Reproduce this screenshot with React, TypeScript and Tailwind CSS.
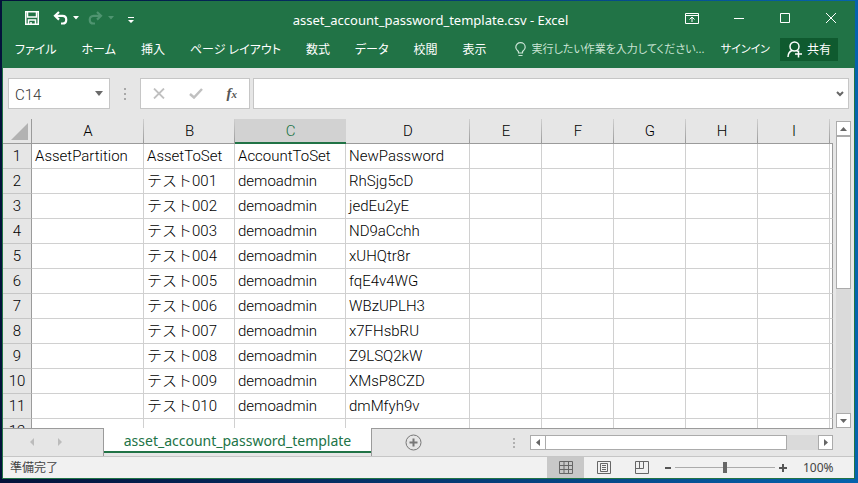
import type { ReactNode } from "react";

const tabs = ["ファイル", "ホーム", "挿入", "ページ レイアウト", "数式", "データ", "校閲", "表示"];

const columns = [
  { name: "A", width: "w-[112px]" },
  { name: "B", width: "w-[91px]" },
  { name: "C", width: "w-[111px]" },
  { name: "D", width: "w-[124px]" },
  { name: "E", width: "w-[72px]" },
  { name: "F", width: "w-[72px]" },
  { name: "G", width: "w-[72px]" },
  { name: "H", width: "w-[72px]" },
  { name: "I", width: "w-[72px]" },
];

const rows = [
  ["AssetPartition", "AssetToSet", "AccountToSet", "NewPassword"],
  ["", "テスト001", "demoadmin", "RhSjg5cD"],
  ["", "テスト002", "demoadmin", "jedEu2yE"],
  ["", "テスト003", "demoadmin", "ND9aCchh"],
  ["", "テスト004", "demoadmin", "xUHQtr8r"],
  ["", "テスト005", "demoadmin", "fqE4v4WG"],
  ["", "テスト006", "demoadmin", "WBzUPLH3"],
  ["", "テスト007", "demoadmin", "x7FHsbRU"],
  ["", "テスト008", "demoadmin", "Z9LSQ2kW"],
  ["", "テスト009", "demoadmin", "XMsP8CZD"],
  ["", "テスト010", "demoadmin", "dmMfyh9v"],
  [],
];

interface IconButtonProps {
  label: string;
  className?: string;
  children: ReactNode;
}

function IconButton({ label, className = "", children }: IconButtonProps) {
  return (
    <button type="button" aria-label={label} className={`flex shrink-0 items-center justify-center ${className}`}>
      {children}
    </button>
  );
}

function Caret() {
  return (
    <svg width="6" height="4" viewBox="0 0 6 4" fill="currentColor">
      <path d="M0 0h6L3 3.500z" />
    </svg>
  );
}

function TitleBar() {
  return (
    <header className="flex h-[34px] items-center text-white">
      <div className="flex flex-1 items-center pl-[22px]">
        <IconButton label="上書き保存" className="w-[14px]">
          <svg width="14" height="14" viewBox="0 0 14 14" fill="none" stroke="currentColor" strokeWidth="1.5">
            <path d="M.75.75h12.5v12.5H.75z" />
            <path d="M2.500 1v5h9V1M3.500 13V9h7v4" />
            <path d="M6 11v2.500" />
          </svg>
        </IconButton>
        <IconButton label="元に戻す" className="ml-3.5 gap-[5px]">
          <svg width="15" height="14" viewBox="0 0 15 14" fill="none" stroke="currentColor" strokeWidth="2.200">
            <path d="M6 1 2 4.800 6 8.600" />
            <path d="M2 4.800h7.500c5 0 5 7.700 0 7.700H8" />
          </svg>
          <Caret />
        </IconButton>
        <IconButton label="やり直し" className="ml-[9px] gap-[5px] text-[#4f9470]">
          <svg width="15" height="14" viewBox="0 0 15 14" fill="none" stroke="currentColor" strokeWidth="2.200">
            <path d="M9 1l4 3.800-4 3.800" />
            <path d="M13 4.800H5.500c-5 0-5 7.700 0 7.700H7" />
          </svg>
          <Caret />
        </IconButton>
        <IconButton label="クイック アクセス ツール バーのユーザー設定" className="ml-3.5 mt-1">
          <svg width="6" height="6" viewBox="0 0 6 6" fill="currentColor">
            <path d="M0 0h6v1H0zM0 3h6L3 6z" />
          </svg>
        </IconButton>
      </div>
      <h1 className="pt-1 text-[13px] leading-4">asset_account_password_template.csv - Excel</h1>
      <div className="flex flex-1 items-center justify-end pr-[18px]">
        <IconButton label="リボンの表示オプション" className="mr-[35px]">
          <svg width="14" height="11" viewBox="0 0 14 11" fill="none" stroke="currentColor">
            <path d="M.5.5h13v10H.5zM.5 2.500h13M7 9V4.500M4.500 6.500 7 4l2.500 2.500" />
          </svg>
        </IconButton>
        <IconButton label="最小化" className="mr-9">
          <svg width="10" height="10" viewBox="0 0 10 10" stroke="currentColor">
            <path d="M0 5.500h10" />
          </svg>
        </IconButton>
        <IconButton label="最大化" className="mr-9">
          <svg width="10" height="10" viewBox="0 0 10 10" fill="none" stroke="currentColor">
            <path d="M.5.5h9v9h-9z" />
          </svg>
        </IconButton>
        <IconButton label="閉じる">
          <svg width="10" height="10" viewBox="0 0 10 10" stroke="currentColor">
            <path d="M0 0l10 10M10 0 0 10" />
          </svg>
        </IconButton>
      </div>
    </header>
  );
}

function RibbonTabs() {
  return (
    <div className="flex h-[33px] items-center pl-3 pr-4 pb-1 text-xs text-white [font-feature-settings:'palt']">
      <nav className="flex gap-[25px]">
        {tabs.map((tab) => (
          <button key={tab} type="button" className="whitespace-nowrap">
            {tab}
          </button>
        ))}
      </nav>
      <label className="ml-7 flex min-w-0 flex-1 items-center gap-1.5 text-[#c9e3d4]">
        <svg width="11" height="15" viewBox="0 0 11 15" fill="none" stroke="currentColor" strokeWidth="1.2" className="shrink-0">
          <path d="M3.500 11V9.500C2.500 8.500.8 7.500.8 5.200a4.700 4.500 0 0 1 9.400 0c0 2.300-1.700 3.300-2.700 4.300V11zM3.500 13.500h4" />
        </svg>
        <input
          type="text"
          aria-label="操作アシスト"
          placeholder="実行したい作業を入力してください..."
          className="w-full min-w-0 bg-transparent text-[11px] outline-none placeholder:text-[#c9e3d4]"
        />
      </label>
      <button type="button" className="ml-2 whitespace-nowrap text-[11px]">サインイン</button>
      <button type="button" className="ml-2.5 flex h-[23px] w-[58px] shrink-0 items-center justify-center gap-1 whitespace-nowrap bg-[#0f5a2f]">
        <svg width="16" height="17" viewBox="0 0 16 17" fill="none" stroke="currentColor" strokeWidth="1.5">
          <circle cx="7.500" cy="5.500" r="4.500" />
          <path d="M1 16c0-3.500 1.500-5.500 4-6.500M9.500 9.500l1.500 1M8 13h7M11.500 9.500v7" />
        </svg>
        共有
      </button>
    </div>
  );
}

function FormulaBar() {
  return (
    <div className="flex h-[51px] items-center gap-[3px] px-[5px]">
      <div className="flex h-[31px] w-[102px] shrink-0 items-center border border-[#c6c6c6] bg-white pr-1.5">
        <input
          type="text"
          aria-label="名前ボックス"
          defaultValue="C14"
          className="w-full min-w-0 pl-1.5 pt-1 font-['Roboto',sans-serif] text-[15px] font-light text-[#333] outline-none"
        />
        <IconButton label="名前の一覧" className="text-[#6a6a6a]">
          <svg width="8" height="5" viewBox="0 0 8 5" fill="currentColor">
            <path d="M0 0h8L4 5z" />
          </svg>
        </IconButton>
      </div>
      <svg width="24" height="12" viewBox="0 0 24 12" fill="#a8a8a8" className="shrink-0">
        <path d="M11 0h2v2h-2zM11 5h2v2h-2zM11 10h2v2h-2z" />
      </svg>
      <div className="flex h-[31px] w-[110px] shrink-0 items-center justify-between border border-[#c6c6c6] bg-white px-3">
        <IconButton label="キャンセル" className="text-[#c0c0c0]">
          <svg width="12" height="11" viewBox="0 0 12 11" stroke="currentColor" strokeWidth="1.800">
            <path d="M1 .5l10 10M11 .5l-10 10" />
          </svg>
        </IconButton>
        <IconButton label="入力" className="text-[#c0c0c0]">
          <svg width="14" height="11" viewBox="0 0 14 11" fill="none" stroke="currentColor" strokeWidth="2.500">
            <path d="M1 6l4 3.500L13 1" />
          </svg>
        </IconButton>
        <button type="button" aria-label="関数の挿入" className="font-['Liberation_Serif',serif] text-[15px] font-bold italic leading-4 text-[#555]">
          f<span className="text-[11px]">x</span>
        </button>
      </div>
      <div className="flex h-[31px] min-w-0 flex-1 items-center border border-[#c6c6c6] bg-white pr-1">
        <input type="text" aria-label="数式バー" className="w-full min-w-0 px-2 text-[15px] font-light outline-none" />
        <IconButton label="数式バーの展開" className="text-[#666]">
          <svg width="8" height="6" viewBox="0 0 8 6" fill="none" stroke="currentColor" strokeWidth="2">
            <path d="M1 1l3 3 3-3" />
          </svg>
        </IconButton>
      </div>
    </div>
  );
}

function Sheet() {
  return (
    <div className="min-w-0 flex-1 overflow-hidden">
      <table className="w-full table-fixed border-separate border-spacing-0 font-['Roboto','Noto_Sans_CJK_JP',sans-serif] text-[15px] font-light leading-5 text-black">
        <thead>
          <tr className="h-[25px]">
            <th className="w-[29px] border-b border-r border-[#9b9b9b] p-0" aria-label="すべて選択">
              <svg width="17" height="17" viewBox="0 0 17 17" fill="#b2b2b2" className="ml-2">
                <path d="M17 0v17H0z" />
              </svg>
            </th>
            {columns.map(({ name, width }) => (
              <th
                key={name}
                scope="col"
                className={`${width} p-0 font-light bg-right bg-no-repeat bg-[length:1px_100%] ${
                  name === "C"
                    ? "border-b-2 border-[#217346] bg-[#d2d2d2] text-[#217346]"
                    : "border-b border-[#9b9b9b] bg-linear-to-b from-[#cfcfcf] to-[#9b9b9b]"
                }`}
              >
                {name}
              </th>
            ))}
            <th className="border-b border-[#9b9b9b] p-0" />
          </tr>
        </thead>
        <tbody>
          {rows.map((row, i) => (
            <tr key={i} className="h-[25px]">
              <th scope="row" className="border-b border-r border-b-[#c6c6c6] border-r-[#9b9b9b] bg-[#e6e6e6] p-0 font-light">
                {i + 1}
              </th>
              {columns.map(({ name }, j) => (
                <td key={name} className="border-b border-r border-[#d0d0d0] bg-white p-0 pl-[3px] whitespace-nowrap">
                  {row[j]}
                </td>
              ))}
              <td className="border-b border-r border-b-[#d0d0d0] border-r-[#9b9b9b] bg-white p-0" />
            </tr>
          ))}
        </tbody>
      </table>
    </div>
  );
}

function VerticalScroll() {
  return (
    <div className="flex w-[21px] shrink-0 flex-col px-[3px] pt-0.5">
      <div className="flex flex-1 flex-col bg-[#dadada]">
        <IconButton label="上へスクロール" className="h-[15px] border border-[#ababab] bg-white text-[#666]">
          <svg width="7" height="4" viewBox="0 0 7 4" fill="currentColor"><path d="M0 4h7L3.500 0z" /></svg>
        </IconButton>
        <div className="h-[153px] border border-[#ababab] bg-white" />
        <IconButton label="下へスクロール" className="mt-auto h-[15px] border border-[#ababab] bg-white text-[#666]">
          <svg width="7" height="4" viewBox="0 0 7 4" fill="currentColor"><path d="M0 0h7L3.500 4z" /></svg>
        </IconButton>
      </div>
    </div>
  );
}

function SheetBar() {
  return (
    <div className="flex h-7 pr-[21px]">
      <div className="flex w-[101px] shrink-0 items-start gap-6 border-r border-t border-[#9b9b9b] pl-[27px] pt-[9px] text-[#bcbcbc]">
        <IconButton label="前のシート">
          <svg width="4" height="8" viewBox="0 0 4 8" fill="currentColor"><path d="M4 0v8L0 4z" /></svg>
        </IconButton>
        <IconButton label="次のシート">
          <svg width="4" height="8" viewBox="0 0 4 8" fill="currentColor"><path d="M0 0v8l4-4z" /></svg>
        </IconButton>
      </div>
      <button type="button" className="h-[25px] w-[267px] shrink-0 border-b-2 border-[#217346] bg-white pt-0.5 text-sm leading-5 text-[#217346]">
        asset_account_password_template
      </button>
      <div className="flex flex-1 items-center border-l border-t border-[#9b9b9b]">
        <IconButton label="新しいシート" className="ml-[33px] text-[#777]">
          <svg width="17" height="17" viewBox="0 0 17 17" fill="none" stroke="currentColor">
            <circle cx="8.500" cy="8.500" r="7.500" />
            <path d="M4.500 8.500h8M8.500 4.500v8" strokeWidth="2" />
          </svg>
        </IconButton>
        <svg width="2" height="10" viewBox="0 0 2 10" fill="#b0b0b0" className="ml-auto mr-[15px]">
          <path d="M0 0h2v2H0zM0 4h2v2H0zM0 8h2v2H0z" />
        </svg>
        <div className="flex h-[15px] w-[303px] bg-[#dadada]">
          <IconButton label="左へスクロール" className="w-4 border border-[#ababab] bg-white text-[#666]">
            <svg width="4" height="7" viewBox="0 0 4 7" fill="currentColor"><path d="M4 0v7L0 3.500z" /></svg>
          </IconButton>
          <div className="w-[241px] border border-l-0 border-[#ababab] bg-white" />
          <IconButton label="右へスクロール" className="ml-auto w-[15px] border border-[#ababab] bg-white text-[#666]">
            <svg width="4" height="7" viewBox="0 0 4 7" fill="currentColor"><path d="M0 0v7l4-3.500z" /></svg>
          </IconButton>
        </div>
      </div>
    </div>
  );
}

function StatusBar() {
  return (
    <footer className="flex h-[22px] items-center border-t border-[#c6c6c6] bg-[#f1f1f1] pl-[7px] pr-[19px] text-xs text-[#444]">
      <span>準備完了</span>
      <IconButton label="標準" className="ml-auto h-full w-[37px] bg-[#c8c8c8] text-[#666]">
        <svg width="14" height="13" viewBox="0 0 14 13" fill="none" stroke="currentColor">
          <path d="M.5.5h13v12H.5zM.5 4.500h13M.5 8.500h13M5 .5v12M9.500.5v12" />
        </svg>
      </IconButton>
      <IconButton label="ページ レイアウト" className="w-[39px] text-[#666]">
        <svg width="14" height="13" viewBox="0 0 14 13" fill="none" stroke="currentColor">
          <path d="M.5.5h13v12H.5zM3.500 2.500h7v8h-7zM5 4.500h4M5 6.500h4M5 8.500h4" />
        </svg>
      </IconButton>
      <IconButton label="改ページ プレビュー" className="w-[37px] text-[#666]">
        <svg width="14" height="13" viewBox="0 0 14 13" fill="none" stroke="currentColor">
          <path d="M.5.5h13v12H.5zM.5 7.500h8v-7M4.500.5v7" />
        </svg>
      </IconButton>
      <IconButton label="縮小" className="ml-[5px] text-[#555]">
        <svg width="6" height="8" viewBox="0 0 6 8" fill="currentColor"><path d="M0 3h6v2H0z" /></svg>
      </IconButton>
      <input
        type="range"
        aria-label="ズーム"
        min="0"
        max="100"
        defaultValue="50"
        className="mx-1 h-[11px] w-[100px] appearance-none bg-[linear-gradient(#ababab,#ababab)] bg-[length:100%_1px] bg-center bg-no-repeat [&::-webkit-slider-thumb]:h-[11px] [&::-webkit-slider-thumb]:w-1 [&::-webkit-slider-thumb]:appearance-none [&::-webkit-slider-thumb]:bg-[#666]"
      />
      <IconButton label="拡大" className="text-[#555]">
        <svg width="8" height="8" viewBox="0 0 8 8" fill="currentColor"><path d="M0 3h8v2H0zM3 0h2v8H3z" /></svg>
      </IconButton>
      <span className="ml-4 w-8">100%</span>
    </footer>
  );
}

export default function App() {
  return (
    <div className="h-screen overflow-hidden bg-linear-to-r from-[#03123a] to-[#0563ad] pb-1 pl-0.5 pr-[3px] pt-px font-['Noto_Sans','Noto_Sans_CJK_JP',sans-serif]">
      <div className="flex h-full flex-col border border-t-0 border-[#217346] bg-[#e6e6e6]">
        <div className="bg-[#217346]">
          <TitleBar />
          <RibbonTabs />
        </div>
        <FormulaBar />
        <main className="flex min-h-0 flex-1">
          <Sheet />
          <VerticalScroll />
        </main>
        <SheetBar />
        <StatusBar />
      </div>
    </div>
  );
}
